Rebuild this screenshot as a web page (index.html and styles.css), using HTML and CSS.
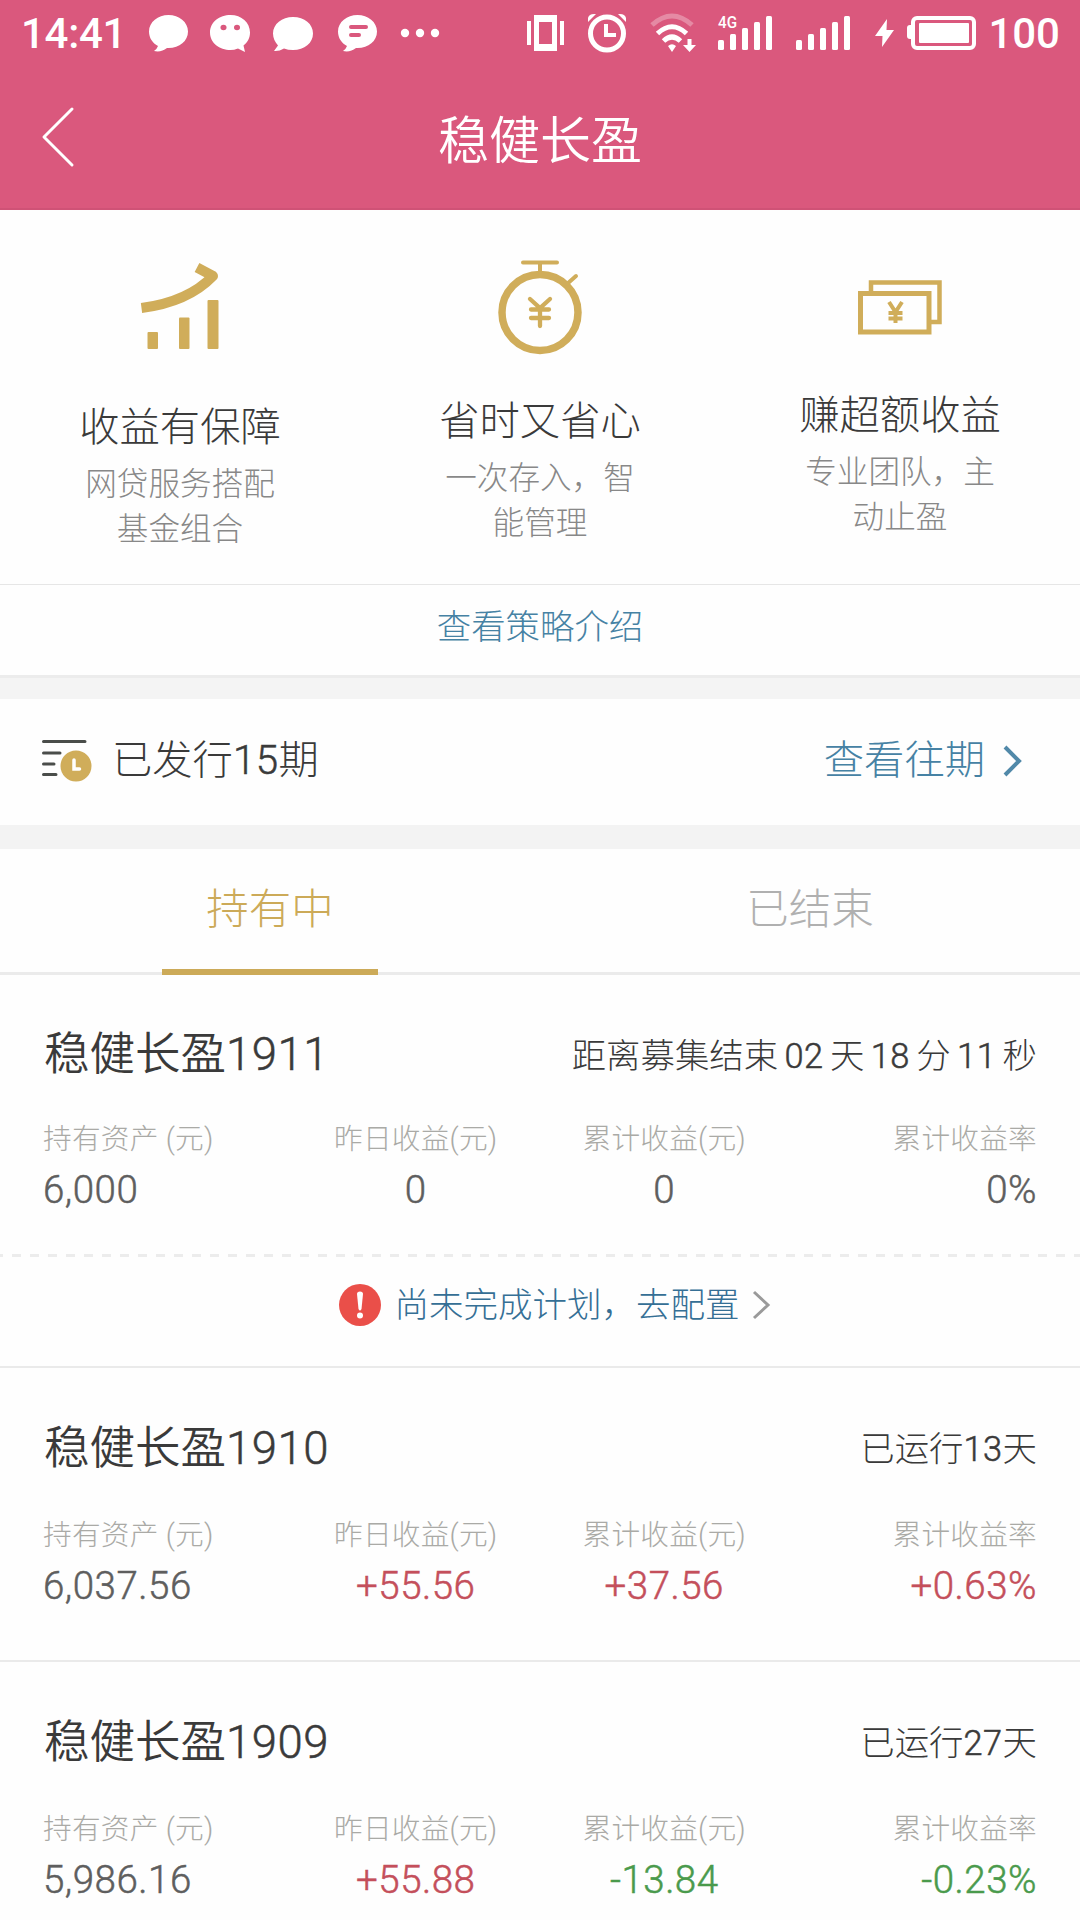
FILE: index.html
```html
<!DOCTYPE html>
<html lang="zh-CN">

<head>
    <meta charset="UTF-8">
    <title>稳健长盈</title>
    <link rel="stylesheet" href="styles.css">
</head>

<body>

    <header class="header">
        <div class="status-bar">
            <span class="time">14:41</span>
            <div class="notices">
                <svg width="40" height="40" viewBox="0 0 40 40" fill="#fff">
                    <path d="M20.500 2C31 2 40 9 40 18.500S31.500 35 20.500 35H19C15 38 11 39 6 38Q9 36 10 33C4.500 30 1 25 1 18.500 1 9 10 2 20.500 2Z"/>
                </svg>
                <svg width="40" height="40" viewBox="0 0 40 40">
                    <path fill="#fff" d="M19.500 2C30.500 2 39 9.500 39 19.500 39 25 36.500 29.500 32.500 32.500L34 39 27 35.500Q23 37 19.500 37C8.500 37-1 30 -1 19.500S8.500 2 19.500 2Z"/>
                    <ellipse fill="#da587d" cx="12.500" cy="14.500" rx="3" ry="2.700"/>
                    <ellipse fill="#da587d" cx="26" cy="14.500" rx="3" ry="2.700"/>
                </svg>
                <svg width="40" height="40" viewBox="0 0 40 40" fill="#fff">
                    <path d="M19 4C30.500 4 39 11 39 20.500S30.500 37 19 37Q14 37 10 35.500 5 38.500 0 38L4 32.500C1 29 -1 25 -1 20.500-1 11 8 4 19 4Z"/>
                </svg>
                <svg width="40" height="40" viewBox="0 0 40 40">
                    <path fill="#fff" d="M20.500 2C31 2 40 9 40 18.500S31.500 35 20.500 35H19C15 38 11 39 6 38Q9 36 10 33C4.500 30 1 25 1 18.500 1 9 10 2 20.500 2Z"/>
                    <path stroke="#da587d" stroke-width="4" stroke-linecap="round" d="M14 14H29M14 22H22"/>
                </svg>
                <svg width="40" height="40" viewBox="0 0 40 40" fill="#fff">
                    <circle cx="5" cy="20" r="4.200"/>
                    <circle cx="20" cy="20" r="4.200"/>
                    <circle cx="35" cy="20" r="4.200"/>
                </svg>
            </div>
            <div class="signals">
                <svg class="vibrate" width="38" height="40" viewBox="0 0 38 40" fill="#fff">
                    <path d="M0 8H4V32H0ZM33 8H37V32H33Z"/>
                    <path fill-rule="evenodd" d="M7 2H30V38H7ZM12 9V31H25V9Z"/>
                </svg>
                <svg class="alarm" width="38" height="40" viewBox="0 0 38 40" fill="none" stroke="#fff">
                    <circle cx="19" cy="20.500" r="16.500" stroke-width="5"/>
                    <path stroke-width="4" d="M18 11V22H28"/>
                    <path fill="#fff" stroke="none" d="M0 9V5Q1 1 6 1H8ZM38 9V5Q37 1 32 1H30Z"/>
                </svg>
                <svg class="wifi" width="48" height="40" viewBox="0 0 48 40" fill="none" stroke="#fff">
                    <path stroke-width="5" opacity=".3" d="M4 12Q24-6 44 12"/>
                    <path stroke-width="5" d="M9.500 20.500Q24 7 38.500 20.500"/>
                    <path stroke-width="5" d="M15.500 28Q24 20 32.500 28"/>
                    <path fill="#fff" stroke="none" d="M20 33Q24 29.500 28 33L24 39ZM39.500 26H43.500V32H48L41.500 39 35 32H39.500Z"/>
                </svg>
                <svg class="signal" width="55" height="40" viewBox="0 0 55 40" fill="#fff">
                    <text class="network" x="0" y="15" textLength="19" lengthAdjust="spacingAndGlyphs">4G</text>
                    <rect y="27" width="6" height="10" rx="1.500"/>
                    <rect x="12" y="21" width="6" height="16" rx="1.500"/>
                    <rect x="24" y="15" width="6" height="22" rx="1.500"/>
                    <rect x="36" y="9" width="6" height="28" rx="1.500"/>
                    <rect x="48" y="3" width="6" height="34" rx="1.500"/>
                </svg>
                <svg class="signal-two" width="55" height="40" viewBox="0 0 55 40" fill="#fff">
                    <rect y="27" width="6" height="10" rx="1.500"/>
                    <rect x="12" y="21" width="6" height="16" rx="1.500"/>
                    <rect x="24" y="15" width="6" height="22" rx="1.500"/>
                    <rect x="36" y="9" width="6" height="28" rx="1.500"/>
                    <rect x="48" y="3" width="6" height="34" rx="1.500"/>
                </svg>
                <svg class="bolt" width="20" height="40" viewBox="0 0 20 40" fill="#fff">
                    <path d="M12 6 0 23H7.500L7 34 19 17H11.500Z"/>
                </svg>
                <svg class="battery" width="70" height="40" viewBox="0 0 70 40" fill="#fff">
                    <rect x="6" y="5" width="61" height="30" rx="4" fill="none" stroke="#fff" stroke-width="4"/>
                    <rect x="12" y="10" width="50" height="20" rx="1"/>
                    <path d="M5 12H3Q0 12 0 15V23Q0 26 3 26H5Z"/>
                </svg>
            </div>
            <span class="percent">100</span>
        </div>
        <div class="nav-bar">
            <svg class="back" width="34" height="62" viewBox="0 0 34 62" fill="none" stroke="#fff" stroke-width="3" stroke-linecap="round" stroke-linejoin="round">
                <path d="M31 3 3 31 31 59"/>
            </svg>
            <h1 class="nav-title">稳健长盈</h1>
        </div>
    </header>

    <section class="features">
        <div class="feature">
            <svg class="feature-icon growth" width="84" height="94" viewBox="0 0 84 94" fill="#d0ad5a">
                <rect x="9.500" y="72" width="10.500" height="17" rx="1"/>
                <rect x="41" y="57.500" width="10.500" height="31.500" rx="1"/>
                <rect x="69.500" y="40" width="11" height="49" rx="1"/>
                <path fill="none" stroke="#d0ad5a" stroke-width="10" stroke-linejoin="round" d="M3.500 48Q50 42 75 16L59 7.500"/>
            </svg>
            <h2>收益有保障</h2>
            <p>网贷服务搭配<br>基金组合</p>
        </div>
        <div class="feature">
            <svg class="feature-icon timer" width="84" height="94" viewBox="0 0 84 94" fill="none" stroke="#d0ad5a" stroke-linecap="round">
                <circle cx="42" cy="52.500" r="38" stroke-width="7.500"/>
                <path stroke-width="4" d="M25 2.500H59M42 3V13M69 24 78 16"/>
                <path stroke-width="4.300" d="M32 39 42 48 52 39M42 48V66M33 49.500H51M33 58H51"/>
            </svg>
            <h2>省时又省心</h2>
            <p>一次存入，智<br>能管理</p>
        </div>
        <div class="feature">
            <svg class="feature-icon notes" width="84" height="94" viewBox="0 0 84 94" fill="none" stroke="#d0ad5a">
                <path stroke-width="4.500" d="M13 33V22.500H81.500V62H73"/>
                <path stroke-width="5" d="M2.500 33.500H71V72H2.500Z"/>
                <path stroke-width="4" d="M31 42 37.500 52 44 42M37.500 52V63M30.500 53H44.500M30.500 58.500H44.500"/>
            </svg>
            <h2>赚超额收益</h2>
            <p>专业团队，主<br>动止盈</p>
        </div>
    </section>
    <a class="strategy">查看策略介绍</a>

    <section class="issued">
        <svg width="50" height="42" viewBox="0 0 50 42">
            <path stroke="#4a4d4a" stroke-width="3" stroke-linecap="round" d="M1.500 1.500H43M1.500 13H18M1.500 24H12M1.500 34.500H14"/>
            <circle cx="34" cy="26" r="15.500" fill="#d0ad5a"/>
            <path stroke="#fff" stroke-width="3.500" stroke-linecap="round" fill="none" d="M32 20V29H37.500"/>
        </svg>
        <span class="issued-text">已发行<span class="num">15</span>期</span>
        <a class="history"><span>查看往期</span>
            <svg width="20" height="32" viewBox="0 0 20 32" fill="none" stroke="#5189a9" stroke-width="4">
                <path d="M2 2 16 16 2 30"/>
            </svg>
        </a>
    </section>

    <nav class="tabs">
        <a class="tab active">持有中</a>
        <a class="tab">已结束</a>
    </nav>

    <section class="plan first">
        <div class="plan-head">
            <h3>稳健长盈<span class="num">1911</span></h3>
            <span class="plan-time">距离募集结束 <span class="num">02</span> 天 <span class="num">18</span> 分 <span class="num">11</span> 秒</span>
        </div>
        <div class="plan-data">
            <div class="cell"><span class="label">持有资产 (元)</span><span class="value">6,000</span></div>
            <div class="cell"><span class="label">昨日收益(元)</span><span class="value">0</span></div>
            <div class="cell"><span class="label">累计收益(元)</span><span class="value">0</span></div>
            <div class="cell"><span class="label">累计收益率</span><span class="value">0%</span></div>
        </div>
        <div class="dash"></div>
        <a class="todo">
            <svg width="42" height="42" viewBox="0 0 42 42">
                <circle cx="21" cy="21" r="21" fill="#ea4f49"/>
                <path fill="#fff" d="M18 10Q18 7.500 21 7.500T24 10L22.500 25Q21 28 19.500 25Z"/>
                <circle cx="21" cy="31.500" r="3" fill="#fff"/>
            </svg>
            <span class="todo-text">尚未完成计划，去配置</span>
            <svg width="20" height="30" viewBox="0 0 20 30" fill="none" stroke="#9a9a9a" stroke-width="3">
                <path d="M2 2 16 15 2 28"/>
            </svg>
        </a>
    </section>

    <section class="plan">
        <div class="plan-head">
            <h3>稳健长盈<span class="num">1910</span></h3>
            <span class="plan-time">已运行<span class="num">13</span>天</span>
        </div>
        <div class="plan-data">
            <div class="cell"><span class="label">持有资产 (元)</span><span class="value">6,037.56</span></div>
            <div class="cell"><span class="label">昨日收益(元)</span><span class="value up">+55.56</span></div>
            <div class="cell"><span class="label">累计收益(元)</span><span class="value up">+37.56</span></div>
            <div class="cell"><span class="label">累计收益率</span><span class="value up">+0.63%</span></div>
        </div>
    </section>

    <section class="plan">
        <div class="plan-head">
            <h3>稳健长盈<span class="num">1909</span></h3>
            <span class="plan-time">已运行<span class="num">27</span>天</span>
        </div>
        <div class="plan-data">
            <div class="cell"><span class="label">持有资产 (元)</span><span class="value">5,986.16</span></div>
            <div class="cell"><span class="label">昨日收益(元)</span><span class="value up">+55.88</span></div>
            <div class="cell"><span class="label">累计收益(元)</span><span class="value down">-13.84</span></div>
            <div class="cell"><span class="label">累计收益率</span><span class="value down">-0.23%</span></div>
        </div>
    </section>

</body>

</html>
```
FILE: styles.css
```css
* {
    box-sizing: border-box;
}

body {
    margin: 0;
    width: 1080px;
    height: 1920px;
    overflow: hidden;
    background: #fefefe;
    color: #3a3a3a;
    font-family: Roboto, "Noto Sans CJK SC", sans-serif;
    font-weight: 300;
}

h1, h2, h3, p {
    margin: 0;
    font-weight: 300;
}

svg {
    display: block;
    flex: none;
    overflow: visible;
}

/* digits a touch heavier than light */
.num,
.value {
    font-weight: 300;
    letter-spacing: 0.5px;
    -webkit-text-stroke: 0.5px currentColor;
}

/* header */
.header {
    height: 210px;
    background: #da587d;
    border-bottom: 2px solid #cf5276;
    color: #fff;
}

.status-bar {
    display: flex;
    align-items: center;
    height: 66px;
    padding: 0 20px 0 21px;
}

.time,
.percent {
    padding-top: 1px;
    font-size: 42px;
    font-weight: 500;
    line-height: 66px;
}

.time {
    width: 127px;
    letter-spacing: -0.3px;
}

.notices {
    display: flex;
    gap: 23px;
}

.signals {
    display: flex;
    margin-left: 87px;
}

.alarm {
    margin-left: 23px;
}

.wifi {
    margin-left: 22px;
}

.signal {
    margin-left: 22px;
}

.signal-two {
    margin-left: 23px;
}

.network {
    font-size: 17px;
    font-weight: 500;
}

.bolt {
    margin-left: 24px;
}

.battery {
    margin-left: 12px;
}

.percent {
    margin-left: auto;
}

.nav-bar {
    display: flex;
    align-items: center;
    height: 142px;
    padding: 0 41px;
}

.nav-title {
    flex: 1;
    margin-right: 34px;
    padding-top: 9px;
    font-size: 51px;
    font-weight: 350;
    line-height: 80px;
    text-align: center;
}

/* features */
.features {
    display: flex;
    height: 375px;
    padding-top: 50px;
    border-bottom: 1px solid #e6e6e6;
}

.feature {
    width: 360px;
    text-align: center;
}

.feature-icon {
    margin: 0 auto;
}

.growth {
    margin-bottom: 48px;
}

.timer {
    margin-bottom: 42px;
}

.notes {
    margin-bottom: 36px;
}

.feature h2 {
    font-size: 40.300px;
    line-height: 52px;
}

.feature p {
    margin-top: 8px;
    color: #888;
    font-size: 31.600px;
    line-height: 45px;
}

.strategy {
    display: block;
    height: 93px;
    border-bottom: 3px solid #ececec;
    color: #4682a4;
    font-size: 34.400px;
    line-height: 84px;
    text-align: center;
}

/* issued row */
.issued {
    display: flex;
    align-items: center;
    height: 171px;
    padding: 0 57px 3px 42px;
    border-top: 21px solid #f4f4f4;
    border-bottom: 24px solid #f3f3f3;
    font-size: 40.300px;
    line-height: 60px;
}

.issued-text {
    margin-left: 20px;
}

.history {
    display: flex;
    align-items: center;
    gap: 18px;
    margin-left: auto;
    color: #4682a4;
}

/* tabs */
.tabs {
    display: flex;
    justify-content: space-around;
    height: 126px;
    border-bottom: 3px solid #ebebeb;
}

.tab {
    width: 216px;
    height: 126px;
    color: #b0b0b0;
    font-size: 42.500px;
    line-height: 121px;
    text-align: center;
}

.tab.active {
    color: #ccaa58;
    border-bottom: 6px solid #ccaa58;
}

/* plans */
.plan {
    height: 294px;
    padding-top: 51px;
    border-bottom: 2px solid #eaeaea;
}

.plan.first {
    height: 393px;
    padding-top: 50px;
}

.plan-head {
    display: flex;
    justify-content: space-between;
    height: 62px;
    padding: 0 43px 0 44px;
    line-height: 60px;
}

.plan-head h3 {
    font-size: 45.500px;
    font-weight: 350;
}

.plan-time {
    font-size: 34.400px;
    word-spacing: -2px;
}

.plan.first .plan-time {
    line-height: 62px;
}

.plan-data {
    display: grid;
    grid-template-columns: repeat(4, 1fr);
    margin-top: 34px;
    padding: 0 43px;
}

.plan.first .plan-data {
    margin-top: 32px;
}

.cell {
    display: flex;
    flex-direction: column;
    align-items: center;
}

.cell:first-child {
    align-items: flex-start;
}

.cell:last-child {
    align-items: flex-end;
}

.label {
    color: #aaaaa6;
    font-size: 28.700px;
    letter-spacing: 0.2px;
    line-height: 40px;
}

.value {
    margin-top: 6px;
    color: #5e5e5e;
    font-size: 38.500px;
    line-height: 50px;
}

.value.up {
    color: #c44f5b;
}

.value.down {
    color: #4a9a4c;
}

.dash {
    height: 3px;
    margin-top: 39px;
    background: repeating-linear-gradient(to right, #ececec 0 9px, transparent 9px 18px);
    background-position: -6px 0;
}

.todo {
    display: flex;
    align-items: center;
    justify-content: center;
    height: 96px;
    padding-left: 30px;
    color: #356f95;
    font-size: 34.500px;
    line-height: 50px;
}

.todo-text {
    margin: 0 12px 0 14px;
    padding-bottom: 1px;
}
```
